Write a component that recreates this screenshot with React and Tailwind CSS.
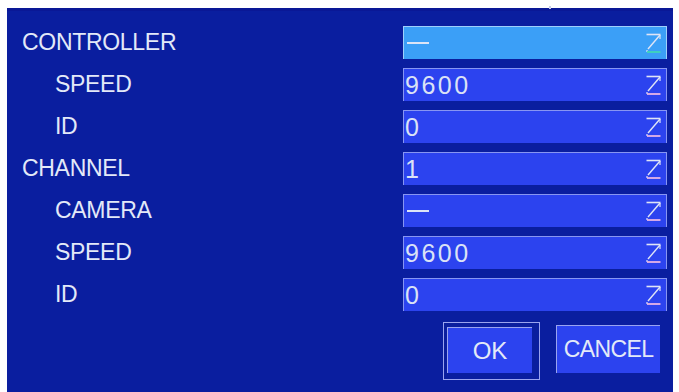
const rows = [
  { label: 'CONTROLLER', value: '—', indent: false, active: true },
  { label: 'SPEED', value: '9600', indent: true },
  { label: 'ID', value: '0', indent: true },
  { label: 'CHANNEL', value: '1', indent: false },
  { label: 'CAMERA', value: '—', indent: true },
  { label: 'SPEED', value: '9600', indent: true },
  { label: 'ID', value: '0', indent: true },
];

const font = { fontFamily: '"Liberation Sans", Arial, sans-serif' };

function DropIcon({ active }) {
  return (
    <svg width="17" height="21" viewBox="0 0 17 21" className="shrink-0">
      <path d="M1.5 1.5 H15.5" stroke="#dfe4f6" strokeWidth="1.6" fill="none" />
      <path d="M15 2 L3 16" stroke="#dfe4f6" strokeWidth="1.4" fill="none" />
      <path d="M15 2 V6" stroke="#dfe4f6" strokeWidth="1.2" fill="none" />
      <path d="M2 17 V19" stroke="#dfe4f6" strokeWidth="1.2" fill="none" />
      <path
        d="M2 19 H15.5"
        stroke={active ? '#3fd6b8' : '#e7b4e6'}
        strokeWidth="1.8"
        fill="none"
      />
    </svg>
  );
}

function Field({ value, active }) {
  const isDash = value === '—';
  return (
    <div
      className={`h-[33px] w-[264px] flex items-center justify-between pr-[4px] border-t border-l border-r ${
        active ? 'bg-[#3b9ff7] border-[#9fd0fb]' : 'bg-[#2c43ef] border-[#8896f2]'
      }`}
    >
      {isDash ? (
        <span className="ml-[3px] block h-[2px] w-[22px] bg-[#dbe4f7]" />
      ) : (
        <span className="pl-[1px] text-[25px] leading-none tracking-[2.5px] text-[#dbe2f6]">
          {value}
        </span>
      )}
      <DropIcon active={active} />
    </div>
  );
}

export default function App() {
  return (
    <div className="w-[679px] h-[392px] bg-white pl-[7px] pt-[8px] pr-[6px] overflow-hidden" style={font}>
      <div className="relative h-full bg-[#0a1e9f] border-t-[3px] border-[#0a1896] pt-[15px]">
        <div className="absolute left-[542px] -top-[5px] h-[3px] w-[2px] bg-[#c8cde8]" />
        <div className="flex flex-col gap-[9px]">
          {rows.map((r, i) => (
            <div key={i} className="flex items-center justify-between pr-[6px]">
              <span
                className={`text-[23px] leading-none tracking-[-0.3px] text-[#e3e9f8] ${
                  r.indent ? 'pl-[48px]' : 'pl-[15px]'
                }`}
              >
                {r.label}
              </span>
              <Field value={r.value} active={r.active} />
            </div>
          ))}
        </div>
        <div className="flex justify-end items-start gap-[16px] pr-[13px] mt-[11px]">
          <div className="border border-[#9aa4f0] pl-[3px] pt-[4px] pr-[7px] pb-[6px]">
            <div className="w-[85px] h-[46px] bg-[#2c43ef] border-t border-l border-[#9aa4f0] flex items-center justify-center text-[24px] text-[#e3e9f8]">
              OK
            </div>
          </div>
          <div className="mt-[3px] w-[104px] h-[48px] bg-[#2c43ef] border-t border-l border-[#9aa4f0] flex items-center justify-center text-[23px] tracking-[-0.6px] text-[#e3e9f8]">
            CANCEL
          </div>
        </div>
      </div>
    </div>
  );
}
